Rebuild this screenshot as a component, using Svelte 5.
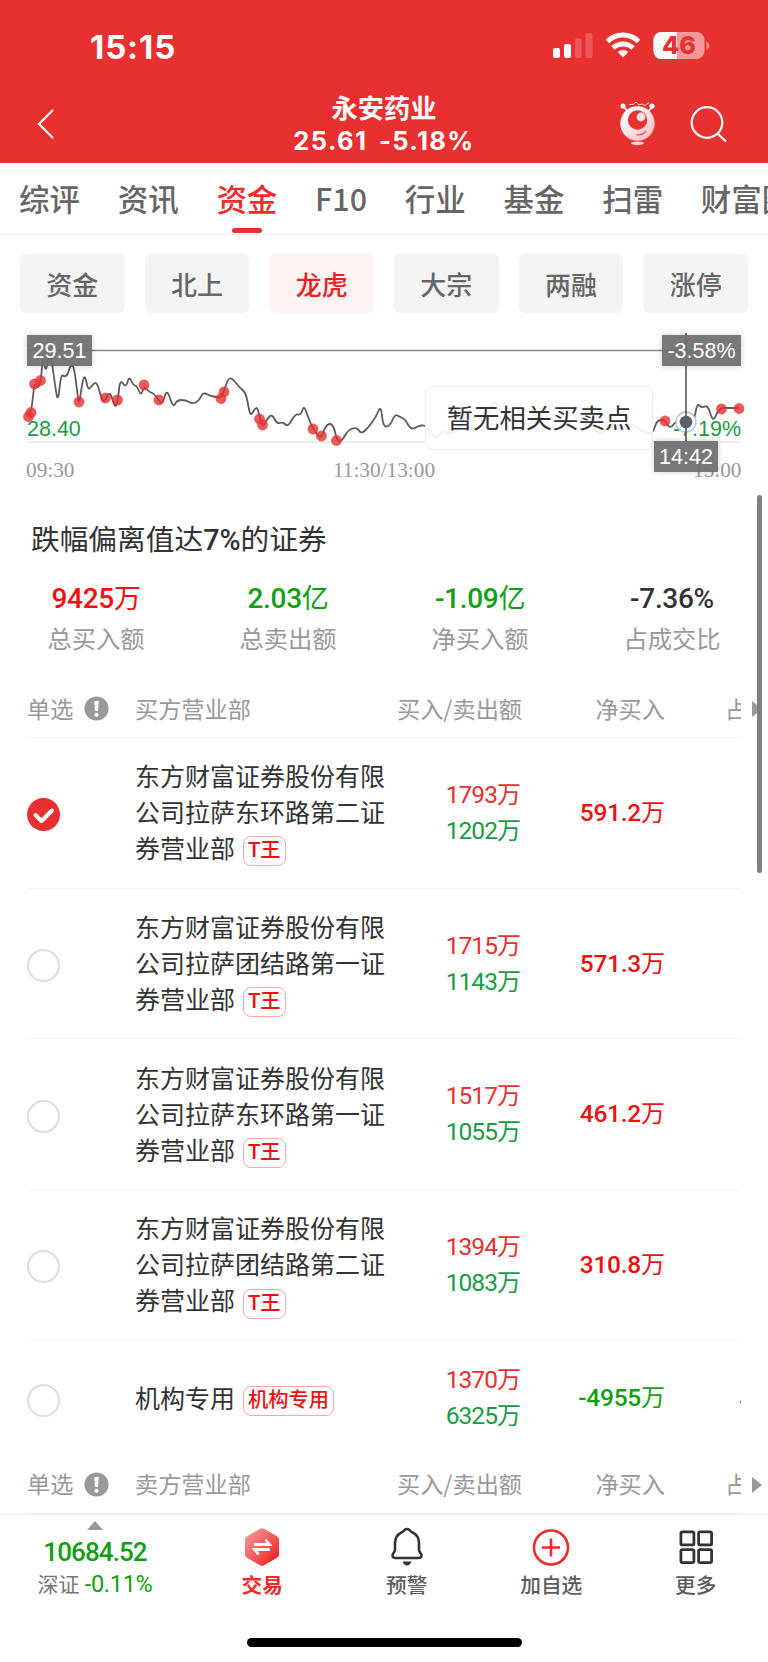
<script lang="ts">
  let tabs: string[] = ["综评", "资讯", "资金", "F10", "行业", "基金", "扫雷", "财富圈"];
  let activeTab: number = 2;
  let filters: string[] = ["资金", "北上", "龙虎", "大宗", "两融", "涨停"];
  let activeFilter: number = 2;

  let summary = [
    { num: "9425", unit: "万", label: "总买入额", tone: "up" },
    { num: "2.03", unit: "亿", label: "总卖出额", tone: "down" },
    { num: "-1.09", unit: "亿", label: "净买入额", tone: "down" },
    { num: "-7.36%", unit: "", label: "占成交比", tone: "" },
  ];

  let long = "东方财富证券股份有限公司拉萨";
  let rows = [
    { name: long + "东环路第二证券营业部", tag: "T王", buy: "1793", sell: "1202", net: "591.2" },
    { name: long + "团结路第一证券营业部", tag: "T王", buy: "1715", sell: "1143", net: "571.3" },
    { name: long + "东环路第一证券营业部", tag: "T王", buy: "1517", sell: "1055", net: "461.2" },
    { name: long + "团结路第二证券营业部", tag: "T王", buy: "1394", sell: "1083", net: "310.8" },
    { name: "机构专用", tag: "机构专用", buy: "1370", sell: "6325", net: "-4955" },
  ];
  let selected: number = 0;

  let line: number[][] = [
    [28, 416], [31, 412], [33, 397], [34.5, 382], [38, 389], [41, 380], [43, 355], [46, 374], [49, 352],
    [52, 362], [55, 385], [58, 403], [61, 374], [65, 377], [68, 374], [70, 366], [73, 365], [75, 374],
    [77, 390], [79, 406], [82, 384], [85, 374], [88, 391], [93, 384], [97, 382], [101, 397], [104, 403],
    [110, 390], [115, 409], [118, 400], [120, 379], [126, 388], [129, 376], [133, 385], [137, 386],
    [141, 396], [144, 386], [149, 392], [155, 394], [162, 406], [167, 388], [173, 408], [177, 400],
    [186, 400], [192, 404], [199, 401], [203, 392], [210, 396], [217, 397], [221, 398], [224, 391],
    [228, 379], [232, 378], [240, 388], [246, 393], [249, 410], [251, 416], [257, 405], [260, 419],
    [263, 427], [267, 419], [272, 414], [277, 424], [283, 422], [288, 427], [295, 414], [301, 415],
    [304, 405], [308, 417], [313, 429], [321, 439], [325, 427], [330, 423], [334, 427], [337, 441],
    [342, 441], [348, 430], [357, 427], [361, 434], [368, 428], [376, 417], [381, 405], [383, 427],
    [390, 426], [395, 414], [400, 417], [405, 419], [411, 430], [418, 426], [425, 425], [430, 430],
    [436, 440], [443, 430], [450, 435], [462, 426], [466, 410], [478, 418], [486, 423], [494, 398],
    [500, 411], [512, 416], [524, 426], [538, 420], [552, 430], [566, 424], [580, 419], [592, 425],
    [600, 436], [610, 425], [618, 430], [630, 422], [645, 433], [653, 433], [657, 420], [665, 420],
    [670, 429], [676, 421], [686, 422], [694, 422], [697, 403], [702, 408], [708, 405], [713, 423],
    [719, 408], [728, 408], [739, 408],
  ];
  let dots: number[][] = [
    [28.5, 416.5], [31, 412.5], [34.5, 384], [40.5, 380.5], [79, 402], [105.5, 398], [117.5, 400],
    [144, 385], [159, 400], [221, 398.5], [224, 392], [259.5, 419], [262.5, 425], [313, 429],
    [321.5, 436], [336.5, 440.5], [466, 415], [665, 421], [721.5, 409], [739, 408.5],
  ];

  // smooth the line through the midpoints of its segments
  let toPath = (pts: number[][]) => {
    let d = `M${pts[0][0]} ${pts[0][1]}`;
    for (let i = 1; i < pts.length - 1; i++) {
      let mx = (pts[i][0] + pts[i + 1][0]) / 2;
      let my = (pts[i][1] + pts[i + 1][1]) / 2;
      d += ` Q${pts[i][0]} ${pts[i][1]} ${mx} ${my}`;
    }
    let last = pts[pts.length - 1];
    return d + ` L${last[0]} ${last[1]}`;
  };
</script>

{#snippet tableHead(side: string)}
  <div class="thead">
    <div class="pick">
      单选
      <svg width="25" height="25" viewBox="0 0 25 25">
        <circle cx="12.5" cy="12.5" r="12.1" fill="#999" />
        <path d="M10.2 5h4.6l-.8 10h-3z" fill="#fff" />
        <circle cx="12.5" cy="18.8" r="2" fill="#fff" />
      </svg>
    </div>
    <div class="name">{side}</div>
    <div class="amount">买入/卖出额</div>
    <div class="net">净买入</div>
    <div class="ratio">占</div>
    <svg class="more" width="10" height="16" viewBox="0 0 10 16"><path d="M0 0l10 8-10 8z" fill="#999" /></svg>
  </div>
{/snippet}

<main>
  <header>
    <div class="status">
      <span class="time">15:15</span>
      <svg width="160" height="32" viewBox="0 0 160 32">
        <rect x="0" y="17" width="7" height="10" rx="2" fill="#fff" />
        <rect x="11" y="13" width="7" height="14" rx="2" fill="#fff" />
        <rect x="22" y="7.500" width="6.500" height="19.500" rx="2" fill="#fff" opacity=".2" />
        <rect x="32.500" y="2" width="7" height="25" rx="2" fill="#fff" opacity=".2" />
        <g fill="none" stroke="#fff" stroke-width="5">
          <path d="M54.500 10.500a22 22 0 0 1 31 0" />
          <path d="M60 17a14.500 14.500 0 0 1 20 0" />
        </g>
        <path d="M70 26.500l-5.300-5.400a7.800 7.800 0 0 1 10.600 0z" fill="#fff" />
        <rect x="100.500" y="1" width="51" height="27" rx="8" fill="#fff" opacity=".5" />
        <path d="M124 1h-15.500a8 8 0 0 0-8 8v11a8 8 0 0 0 8 8H124z" fill="#fff" />
        <path d="M153.500 10.500q3 1.500 3 4t-3 4z" fill="#fff" opacity=".5" />
        <text x="126" y="23.300" text-anchor="middle" class="battery">46</text>
      </svg>
    </div>
    <div class="titlebar">
      <svg class="back" width="20" height="32" viewBox="0 0 20 32">
        <path d="M17 2L3 16l14 14" fill="none" stroke="#fff" stroke-width="2.200" />
      </svg>
      <div class="stock">
        <h1>永安药业</h1>
        <p>25.61 <span>-5.18%</span></p>
      </div>
      <svg class="robot" width="38" height="46" viewBox="0 0 38 46">
        <defs>
          <linearGradient id="face" x1="0" y1="0" x2="1" y2="1">
            <stop offset=".2" stop-color="#fff" />
            <stop offset="1" stop-color="#ffb5b5" />
          </linearGradient>
        </defs>
        <path d="M5 6l5 6M33 6l-5 6" stroke="#fff" stroke-width="1.600" />
        <path d="M10 3.500h4l3-2.500 3 3 3-1 3 1.500 4-3" fill="none" stroke="#fff" stroke-width=".8" />
        <circle cx="4" cy="5" r="2.600" fill="#fff" />
        <circle cx="33" cy="5" r="2.600" fill="#fff" />
        <circle cx="18.500" cy="22.500" r="17.200" fill="url(#face)" />
        <circle cx="18.500" cy="19" r="9.700" fill="#e93030" />
        <circle cx="22" cy="16" r="4.400" fill="#ffe4e4" />
        <path d="M17.500 34q7 0 9.500-4" fill="none" stroke="#e93030" stroke-width="1.200" />
        <ellipse cx="18.500" cy="42.300" rx="6.500" ry="1.800" fill="#ffd0d0" />
      </svg>
      <svg class="search" width="38" height="38" viewBox="0 0 38 38">
        <circle cx="17" cy="17.500" r="15.300" fill="none" stroke="#fff" stroke-width="2.200" />
        <path d="M27.500 28.500l8.500 8" stroke="#fff" stroke-width="2.400" />
      </svg>
    </div>
  </header>

  <nav class="tabs">
    {#each tabs as tab, i}
      <button class:active={i == activeTab} on:click={() => (activeTab = i)}>{tab}</button>
    {/each}
  </nav>

  <div class="filters">
    {#each filters as filter, i}
      <button class:active={i == activeFilter} on:click={() => (activeFilter = i)}>{filter}</button>
    {/each}
  </div>

  <section class="chart">
    <svg width="768" height="162" viewBox="0 325 768 162">
      <path d="M27 442H741" stroke="#eee" stroke-width="2" />
      <g class="axis">
        <text x="26" y="477">09:30</text>
        <text x="384" y="477" text-anchor="middle">11:30/13:00</text>
        <text x="741.500" y="477" text-anchor="end">15:00</text>
      </g>
      <path d={toPath(line)} fill="none" stroke="#5c5c5c" stroke-width="1.800" />
      {#each dots as [x, y]}
        <circle cx={x} cy={y} r="5.400" fill="#e93030" opacity=".8" />
      {/each}
      <g class="range">
        <text x="27" y="436">28.40</text>
        <text x="741" y="436" text-anchor="end">-7.19%</text>
      </g>
      <path d="M27 350.500H741" stroke="#888" stroke-width="1.700" />
      <path d="M686 333V442" stroke="#555" stroke-width="1.600" />
      <circle cx="686" cy="422" r="10" fill="#fff" stroke="#a9c4e2" stroke-width="1.300" />
      <path d="M686 411V433" stroke="#555" stroke-width="1.600" />
      <circle cx="686" cy="422" r="6.300" fill="#5b6168" />
    </svg>
    <span class="mark price">29.51</span>
    <span class="mark percent">-3.58%</span>
    <span class="mark clock">14:42</span>
    <div class="toast">暂无相关买卖点</div>
  </section>

  <section class="list">
    <h2>跌幅偏离值达<b>7%</b>的证券</h2>
    <div class="summary">
      {#each summary as item}
        <div>
          <strong class={item.tone}>{item.num}<i>{item.unit}</i></strong>
          <span>{item.label}</span>
        </div>
      {/each}
    </div>
    {@render tableHead("买方营业部")}
    {#each rows as row, i}
      <div class="row" class:short={row.name.length < 10}>
        <div class="pick">
          <button class="radio" class:checked={i == selected} aria-label="单选" on:click={() => (selected = i)}>
            {#if i == selected}
              <svg width="33" height="33" viewBox="0 0 33 33">
                <path d="M8.500 17l6 6 10.500-10.500" fill="none" stroke="#fff" stroke-width="4" stroke-linecap="round" stroke-linejoin="round" />
              </svg>
            {/if}
          </button>
        </div>
        <div class="name">{row.name}<em>{row.tag}</em></div>
        <div class="amount">
          <p class="buy">{row.buy}<i>万</i></p>
          <p class="sell">{row.sell}<i>万</i></p>
        </div>
        <div class="net {row.net.startsWith('-') ? 'down' : 'up'}">{row.net}<i>万</i></div>
        <div class="ratio">{row.net.startsWith("-") ? "-" : ""}</div>
      </div>
    {/each}
    {@render tableHead("卖方营业部")}
    <div class="scrollbar"></div>
  </section>

  <footer>
    <div class="index">
      <svg width="16" height="9" viewBox="0 0 16 9"><path d="M8 0l8 9H0z" fill="#999" /></svg>
      <strong>10684.52</strong>
      <p>深证 <span>-0.11%</span></p>
    </div>
    <div class="item trade">
      <svg width="40" height="40" viewBox="0 0 40 40">
        <defs>
          <linearGradient id="hex" x1="0" y1="0" x2="1" y2="1">
            <stop offset="0" stop-color="#f7a3a3" />
            <stop offset=".9" stop-color="#ee2424" />
          </linearGradient>
        </defs>
        <path d="M18 1.800q2-1.200 4 0l13 7.400q2 1.200 2 3.400v14.800q0 2.200-2 3.400l-13 7.400q-2 1.200-4 0l-13-7.400q-2-1.200-2-3.400V12.600q0-2.200 2-3.400z" fill="url(#hex)" />
        <path d="M12 17.500h15.500l-4-5M28 22.500H12.500l4 5" fill="none" stroke="#fff" stroke-width="2.800" />
      </svg>
      交易
    </div>
    <div class="item">
      <svg width="40" height="40" viewBox="0 0 40 40">
        <path d="M17.500 3q2.500-2 5 0c.8 1.500 2 2 3.500 2.700 4 2.300 6 6 6 10.300v7c0 2 2.500 3 2.500 5.500q0 2.500-3 2.500h-23q-3 0-3-2.500C5.500 26 8 25 8 23v-7c0-4.300 2-8 6-10.300 1.500-.7 2.700-1.200 3.500-2.700z" fill="none" stroke="#333" stroke-width="2.600" />
        <path d="M15.500 34.500h9q-1.500 4-4.500 4t-4.500-4z" fill="#333" />
      </svg>
      预警
    </div>
    <div class="item">
      <svg width="40" height="40" viewBox="0 0 40 40">
        <circle cx="20" cy="20.500" r="17" fill="none" stroke="#f02b2b" stroke-width="2.600" />
        <path d="M11 20.500h18M20 11.500v18" stroke="#f02b2b" stroke-width="2.600" />
      </svg>
      加自选
    </div>
    <div class="item">
      <svg width="40" height="40" viewBox="0 0 40 40" fill="none" stroke="#333" stroke-width="2.800">
        <rect x="4.900" y="4.900" width="13" height="13" rx="1.500" />
        <rect x="22.600" y="4.900" width="13" height="13" rx="1.500" />
        <rect x="4.900" y="22.600" width="13" height="13" rx="1.500" />
        <rect x="22.600" y="22.600" width="13" height="13" rx="1.500" />
      </svg>
      更多
    </div>
  </footer>
  <div class="home"></div>
</main>

<style>
  :global(body) {
    margin: 0;
    background: #fff;
  }
  main {
    width: 768px;
    height: 1662px;
    overflow: hidden;
    display: flex;
    flex-direction: column;
    font-family: "Noto Sans CJK SC", sans-serif;
    color: #333;
  }
  h1, h2, p {
    margin: 0;
    font-weight: 400;
  }
  i, em {
    font-style: normal;
  }
  button {
    border: 0;
    padding: 0;
    background: none;
    font: inherit;
    color: inherit;
    cursor: pointer;
  }
  svg {
    display: block;
    flex: none;
  }
  header {
    height: 163px;
    flex: none;
    background: #e93030;
    color: #fff;
    font-family: Inter, "Noto Sans CJK SC", sans-serif;
  }
  .status {
    height: 94px;
    padding: 0 55px 0 90px;
    display: flex;
    justify-content: space-between;
    align-items: center;
  }
  .time {
    margin-top: -1px;
    font-size: 33px;
    font-weight: 700;
    letter-spacing: 0.900px;
  }
  .battery {
    font-family: Inter, sans-serif;
    font-size: 25px;
    font-weight: 800;
    fill: #e93030;
  }
  .titlebar {
    height: 69px;
    display: grid;
    grid-template-columns: 168px 1fr 38px 38px;
    column-gap: 33px;
    padding: 0 40px 0 35px;
  }
  .back {
    margin: 14px 0 0 1px;
  }
  .stock {
    width: 240px;
    margin-left: 28px;
    text-align: center;
  }
  .stock h1 {
    font-size: 26.300px;
    line-height: 30px;
    font-weight: 700;
    white-space: nowrap;
  }
  .stock p {
    font-size: 25.500px;
    line-height: 34px;
    font-weight: 700;
    letter-spacing: 1.400px;
    white-space: nowrap;
  }
  .stock span {
    margin-left: 4px;
  }
  .robot {
    margin-top: 7px;
  }
  .search {
    margin-top: 11px;
  }
  .tabs {
    height: 72px;
    flex: none;
    box-sizing: border-box;
    border-bottom: 1px solid #eee;
    display: flex;
    gap: 37.700px;
    padding-left: 19px;
    font-size: 30.500px;
    font-weight: 500;
    color: #666;
    white-space: nowrap;
  }
  .tabs button {
    position: relative;
    flex: none;
    padding-bottom: 2px;
  }
  .tabs .active {
    color: #f02b2b;
  }
  .tabs .active::after {
    content: "";
    position: absolute;
    left: 50%;
    bottom: 1px;
    width: 30px;
    height: 5px;
    margin-left: -15px;
    border-radius: 3px;
    background: #e93030;
  }
  .filters {
    display: flex;
    flex: none;
    gap: 20px;
    height: 59px;
    padding: 19px 20px 12px;
  }
  .filters button {
    flex: 1;
    border-radius: 6px;
    background: #f4f4f4;
    color: #666;
    font-size: 26px;
    font-weight: 500;
  }
  .filters .active {
    background: #fff2f2;
    color: #f02020;
  }
  .chart {
    position: relative;
    height: 162px;
    flex: none;
  }
  .axis {
    font-family: "Liberation Serif", serif;
    font-size: 21.300px;
    fill: #999;
  }
  .range {
    font-family: "Liberation Sans", sans-serif;
    font-size: 21.500px;
    fill: #1a9c44;
  }
  .mark {
    position: absolute;
    height: 31px;
    line-height: 32px;
    text-align: center;
    color: #fff;
    background: rgba(110, 110, 110, 0.93);
    box-shadow: 0 0 6px rgba(0, 0, 0, 0.2);
    font-family: "Liberation Sans", sans-serif;
    font-size: 21.500px;
  }
  .price {
    left: 27px;
    top: 10px;
    width: 65px;
  }
  .percent {
    right: 27px;
    top: 10px;
    width: 79px;
  }
  .clock {
    left: 654px;
    top: 116px;
    width: 64px;
  }
  .toast {
    position: absolute;
    left: 425px;
    top: 61px;
    width: 226px;
    height: 62px;
    line-height: 60px;
    border: 1px solid #eee;
    border-radius: 8px;
    background: rgba(255, 255, 255, 0.9);
    text-align: center;
    font-size: 26.400px;
  }
  .list {
    position: relative;
    height: 1027px;
    flex: none;
    overflow: hidden;
  }
  h2 {
    padding: 29px 0 0 31px;
    font-size: 28.700px;
    line-height: 44px;
    height: 44px;
  }
  h2 b {
    font-family: Roboto, sans-serif;
    font-weight: 500;
  }
  .summary {
    display: grid;
    grid-template-columns: repeat(4, 1fr);
    height: 120px;
    text-align: center;
  }
  .summary div {
    padding-top: 19px;
  }
  .summary strong {
    display: block;
    font-family: Roboto, "Noto Sans CJK SC", sans-serif;
    font-size: 28px;
    line-height: 40px;
    font-weight: 500;
    letter-spacing: -0.300px;
  }
  .summary i {
    font-family: "Noto Sans CJK SC", sans-serif;
    font-size: 27px;
    line-height: 0;
    font-weight: 400;
  }
  .summary span {
    display: block;
    font-size: 24.300px;
    line-height: 38px;
    color: #999;
  }
  .up {
    color: #f01010;
  }
  .down {
    color: #12a012;
  }
  .thead,
  .row {
    display: grid;
    grid-template-columns: 108px 262px 124px 144px 76px;
    align-items: center;
    box-sizing: border-box;
    margin: 0 27px;
    border-bottom: 1px solid #f3f3f3;
  }
  .thead {
    position: relative;
    height: 58px;
    padding-bottom: 2px;
    font-size: 23.200px;
    line-height: 34px;
    color: #999;
  }
  .thead .pick {
    display: flex;
    align-items: center;
    gap: 11px;
  }
  .thead .pick svg {
    margin-top: 2px;
  }
  .thead .more {
    position: absolute;
    right: -21px;
    top: 21px;
  }
  .thead .ratio {
    padding-left: 60px;
    overflow: hidden;
    white-space: nowrap;
  }
  .row {
    height: 150.700px;
  }
  .row.short {
    height: 115px;
    border-bottom: 0;
  }
  .radio {
    display: block;
    box-sizing: border-box;
    width: 33px;
    height: 33px;
    margin-top: 4px;
    border: 2px solid #ddd;
    border-radius: 50%;
  }
  .radio.checked {
    border: 0;
    background: #e93030;
  }
  .name {
    width: 252px;
    font-size: 25px;
    line-height: 36px;
  }
  .row .name {
    margin-top: -3px;
  }
  .thead .name {
    font-size: 23.200px;
  }
  .name em {
    display: inline-block;
    box-sizing: border-box;
    height: 30px;
    margin: -1px 0 -1px 8px;
    padding: 0 4px;
    border: 1px solid #ffa5a5;
    border-radius: 8px;
    line-height: 27px;
    font-family: Roboto, "Noto Sans CJK SC", sans-serif;
    font-size: 20.300px;
    font-weight: 500;
    color: #f01010;
    vertical-align: middle;
  }
  .amount,
  .net {
    text-align: right;
    white-space: nowrap;
  }
  .row .amount,
  .row .net {
    font-family: Roboto, "Noto Sans CJK SC", sans-serif;
    font-size: 24.500px;
    line-height: 36px;
    letter-spacing: -0.950px;
  }
  .row .net {
    font-weight: 500;
    letter-spacing: -0.250px;
  }
  .row i {
    font-family: "Noto Sans CJK SC", sans-serif;
    font-size: 24px;
    line-height: 0;
    font-weight: 400;
    letter-spacing: 0;
  }
  .buy {
    color: #e93030;
  }
  .sell {
    color: #1a9c44;
  }
  .row .ratio {
    padding-left: 74px;
    width: 2px;
    overflow: hidden;
    font-size: 24px;
  }
  .scrollbar {
    position: absolute;
    right: 6px;
    top: 8px;
    width: 5px;
    height: 378px;
    border-radius: 3px;
    background: #808080;
  }
  footer {
    height: 86px;
    flex: none;
    display: grid;
    grid-template-columns: 190px repeat(4, 1fr);
    border-top: 1px solid #eee;
  }
  .index {
    display: flex;
    flex-direction: column;
    align-items: center;
    padding-top: 6px;
    font-family: Roboto, "Noto Sans CJK SC", sans-serif;
  }
  .index strong {
    font-size: 26px;
    line-height: 44px;
    font-weight: 500;
    letter-spacing: -0.900px;
    color: #12a012;
  }
  .index p {
    font-size: 21px;
    line-height: 20px;
    white-space: nowrap;
    color: #777;
  }
  .index span {
    font-size: 23.500px;
    letter-spacing: -0.300px;
    color: #12a012;
  }
  .item {
    display: flex;
    flex-direction: column;
    align-items: center;
    padding-top: 12px;
    font-size: 20.700px;
    line-height: 34px;
    font-weight: 500;
    color: #5c5c5c;
  }
  .trade {
    color: #f02b2b;
    font-weight: 700;
  }
  .home {
    width: 275px;
    height: 9px;
    margin: 37px auto 0 247px;
    flex: none;
    border-radius: 5px;
    background: #000;
  }
</style>
